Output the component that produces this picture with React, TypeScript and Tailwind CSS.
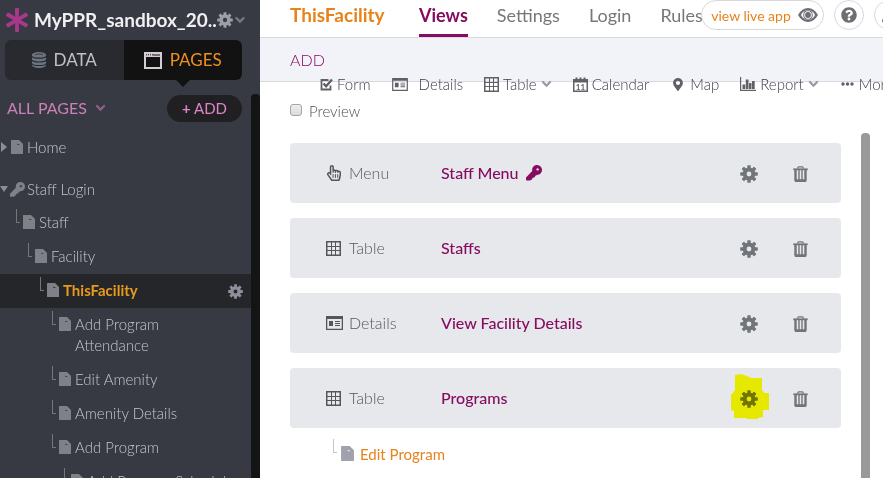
import type { ReactNode } from "react";
import { FaAsterisk, FaMapMarkerAlt, FaQuestionCircle, FaRegHandPointer } from "react-icons/fa";

type IconProps = { className?: string };

const spokes = [0, 45, 90, 135, 180, 225, 270, 315];

function Gear({ className }: IconProps) {
  return (
    <svg viewBox="0 0 18 18" className={className} fill="currentColor" aria-hidden="true">
      {spokes.map((angle) => (
        <rect key={angle} x="7.3" y="0.2" width="3.4" height="4.6" rx="0.6" transform={`rotate(${angle} 9 9)`} />
      ))}
      <circle cx="9" cy="9" r="4.4" fill="none" stroke="currentColor" strokeWidth="4" />
    </svg>
  );
}

function Chevron({ className }: IconProps) {
  return (
    <svg viewBox="0 0 10 8" className={className} fill="none" stroke="currentColor" strokeWidth="2.2" strokeLinecap="round" aria-hidden="true">
      <path d="M1.4 2 5 5.6 8.6 2" />
    </svg>
  );
}

function FileIcon({ className }: IconProps) {
  return (
    <svg viewBox="0 0 12 14" className={className} fill="currentColor" fillRule="evenodd" aria-hidden="true">
      <path d="M0 .5A.5.5 0 0 1 .5 0H8l4 4v9.5a.5.5 0 0 1-.5.5H.5a.5.5 0 0 1-.5-.5ZM6.3 3.8v1.2h2.2V4.400Z" />
    </svg>
  );
}

function KeyIcon({ className }: IconProps) {
  return (
    <svg viewBox="0 0 16 16" className={className} fill="currentColor" fillRule="evenodd" aria-hidden="true">
      <path d="M11 0a4.900 4.900 0 0 1 5 5c-.1 3-2.300 4.900-5 4.900L9.400 10.700 8.600 12.200 6.500 12.900 5.900 14.500 4 15.600H.8Q0 15.600 0 14.800V12.600L6.200 6C5.700 2.600 7.900 0 11 0ZM11.600 3.200a1.200 1.200 0 1 0 .01 0Z" />
    </svg>
  );
}

function TableIcon({ className }: IconProps) {
  return (
    <svg viewBox="0 0 15 15" className={className} fill="none" stroke="currentColor" aria-hidden="true">
      <rect x="0.75" y="0.75" width="13.5" height="13.5" strokeWidth="1.5" />
      <path d="M5.500 1v13M9.500 1v13M1 5.500h13M1 9.500h13" strokeWidth="1" />
    </svg>
  );
}

function DetailsIcon({ className }: IconProps) {
  return (
    <svg viewBox="0 0 17 14" className={className} fill="currentColor" aria-hidden="true">
      <path fillRule="evenodd" d="M0 0h17v14H0ZM1.300 3v9.700h14.400V3Z" />
      <path d="M3 5h4v5H3ZM9 5h5v1H9ZM9 7h5v1H9ZM9 9h5v1H9Z" />
    </svg>
  );
}

function FormIcon({ className }: IconProps) {
  return (
    <svg viewBox="0 0 13 13" className={className} fill="none" stroke="currentColor" aria-hidden="true">
      <path d="M8.500 2H1.500v9.500h9V7.500" strokeWidth="1.800" />
      <path d="m3.500 5.500 2.600 2.800L12 1.500" strokeWidth="2.400" />
    </svg>
  );
}

function CalendarIcon({ className }: IconProps) {
  return (
    <svg viewBox="0 0 15 15" className={className} fill="none" stroke="currentColor" aria-hidden="true">
      <rect x="0.75" y="2.75" width="13.5" height="11.5" strokeWidth="1.5" />
      <path d="M1 4h13" strokeWidth="3" />
      <path d="M3.500.5v3M11.500.5v3M7.500.5v3" strokeWidth="2" />
      <text x="7.500" y="12.800" textAnchor="middle" fontSize="8" fontWeight="700" fill="currentColor" stroke="none">11</text>
    </svg>
  );
}

function ReportIcon({ className }: IconProps) {
  return (
    <svg viewBox="0 0 16 14" className={className} fill="currentColor" aria-hidden="true">
      <path d="M0 0h1.200v12.800H16V14H0ZM2.500 7.500h2.700V12H2.500ZM5.800 2.500h2.700V12H5.800ZM9 6h2.500v6H9ZM12 4h2.700v8H12Z" />
    </svg>
  );
}

function DotsIcon({ className }: IconProps) {
  return (
    <svg viewBox="0 0 13 4" className={className} fill="currentColor" aria-hidden="true">
      <circle cx="2" cy="2" r="1.700" />
      <circle cx="6.500" cy="2" r="1.700" />
      <circle cx="11" cy="2" r="1.700" />
    </svg>
  );
}

function TrashIcon({ className }: IconProps) {
  return (
    <svg viewBox="0 0 15 16" className={className} fill="none" stroke="currentColor" aria-hidden="true">
      <path d="M4.800 2.500V1.800Q4.800.8 5.800.8h3.400q1 0 1 1v.7" strokeWidth="1.300" />
      <path d="M.3 3.300h14.400" strokeWidth="1.800" />
      <path d="M2.500 4v10q0 1 1 1h8q1 0 1-1V4" strokeWidth="2.400" />
      <path d="M2 14.300h11" strokeWidth="2" />
      <path d="M6 4v10M9 4v10" strokeWidth="1.400" />
    </svg>
  );
}

function DatabaseIcon({ className }: IconProps) {
  return (
    <svg viewBox="0 0 14 16" className={className} aria-hidden="true">
      <path fill="currentColor" d="M0 3c0-4 14-4 14 0v10c0 4-14 4-14 0Z" />
      <g fill="none" stroke="#292a2f" strokeWidth="1.100">
        <path d="M0 4.200c1 2.600 13 2.600 14 0M0 8c1 2.600 13 2.600 14 0M0 11.600c1 2.600 13 2.600 14 0" />
        <path d="M3 2.800c2-1.200 6-1.200 8 0" strokeWidth="0.800" />
      </g>
    </svg>
  );
}

function WindowIcon({ className }: IconProps) {
  return (
    <svg viewBox="0 0 18 17" className={className} fill="none" stroke="currentColor" aria-hidden="true">
      <rect x="1" y="1" width="16" height="15" strokeWidth="2" />
      <path d="M1 3.500h16" strokeWidth="3" />
      <path d="M2 2.800h7" strokeWidth="1" strokeDasharray="1 1" stroke="#121212" />
      <path d="M9 3h7" strokeWidth="1" stroke="#121212" />
    </svg>
  );
}

function EyeIcon({ className }: IconProps) {
  return (
    <svg viewBox="0 0 20 14" className={className} fill="currentColor" fillRule="evenodd" aria-hidden="true">
      <path d="M0 7Q4 0 10 0t10 7q-4 7-10 7T0 7ZM10 2a5 5 0 1 0 .01 0Z" />
      <path d="M3 7q1-2.600 3.200-3.700-2 3.700 0 7.400Q4 9.600 3 7ZM17 7q-1-2.600-3.200-3.700 2 3.700 0 7.400Q16 9.600 17 7Z" fill="white" />
      <circle cx="10" cy="7" r="2.900" />
      <circle cx="10" cy="7" r="4.300" fill="none" stroke="currentColor" strokeWidth="1" />
    </svg>
  );
}

function Elbow({ className }: IconProps) {
  return <span className={`h-[14px] w-1 shrink-0 border-b border-l ${className}`} />;
}

const pages = [
  { name: "Staff", indent: "pl-4" },
  { name: "Facility", indent: "pl-7" },
  { name: "ThisFacility", indent: "pl-10", active: true },
  { name: "Add Program Attendance", indent: "pl-[52px]" },
  { name: "Edit Amenity", indent: "pl-[52px]" },
  { name: "Amenity Details", indent: "pl-[52px]" },
  { name: "Add Program", indent: "pl-[52px]" },
  { name: "Add Program Schedule", indent: "pl-16" },
];

function Sidebar() {
  return (
    <aside className="flex w-[260px] shrink-0 flex-col overflow-hidden bg-[#383a43] text-[#c6c6ca]">
      <div className="flex h-10 shrink-0 items-center pl-[5px]">
        <FaAsterisk className="size-6 shrink-0 text-[#a8388a]" />
        <h1 className="ml-[5px] whitespace-nowrap text-[19px] font-bold leading-6 text-[#f0f0f2]">MyPPR_sandbox_20..</h1>
        <button aria-label="App settings" className="flex items-center gap-0.5 text-[#9b9ea6]">
          <Gear className="size-4" />
          <Chevron className="h-2 w-[10px] text-[#777a84]" />
        </button>
      </div>
      <nav className="relative mx-[5px] mr-[18px] grid h-10 shrink-0 grid-cols-2 text-[17px]">
        <button className="flex items-center justify-center gap-2 rounded-l-md bg-[#292a2f] text-[#c0c1c5]">
          <DatabaseIcon className="h-4 w-[14px] text-[#6c7480]" />
          DATA
        </button>
        <button className="flex items-center justify-center gap-2 rounded-r-md bg-[#121212] text-[#f0901e]">
          <WindowIcon className="h-[17px] w-[18px] text-[#d5cdd4]" />
          PAGES
        </button>
        <svg viewBox="0 0 14 7" className="absolute right-[52px] top-full h-[7px] w-[14px] fill-[#121212]" aria-hidden="true">
          <path d="M0 0h14L7 7Z" />
        </svg>
      </nav>
      <div className="mt-[14px] flex min-h-0 flex-1">
        <div className="min-w-0 flex-1">
          <div className="flex h-7 items-center justify-between pl-[7px] pr-[9px] text-[#cc80b8]">
            <button className="flex items-center gap-2 text-[16px]">
              ALL PAGES
              <Chevron className="h-2 w-[11px] text-[#925f88]" />
            </button>
            <button className="h-[27px] w-[75px] rounded-full bg-[#202023] text-[15px] leading-[27px] text-[#dc86c6]">
              <span className="font-bold">+</span> ADD
            </button>
          </div>
          <div className="mt-2 text-[15px] font-light leading-[21px]">
            <a href="#home" className="mb-2 flex h-[34px] items-center">
              <span className="ml-px border-y-[5px] border-l-[6px] border-y-transparent border-l-[#8d8e95]" />
              <FileIcon className="ml-1 h-[14px] w-3 text-[#808188]" />
              <span className="ml-1">Home</span>
            </a>
            <a href="#staff-login" className="flex h-[34px] items-center">
              <span className="border-x-[4px] border-t-[6px] border-x-transparent border-t-[#8d8e95]" />
              <KeyIcon className="ml-0.5 size-[15px] text-[#808188]" />
              <span className="ml-0.5">Staff Login</span>
            </a>
            {pages.map((page) => (
              <a
                key={page.name}
                href={`#${page.name}`}
                className={`flex items-start pb-[7px] pr-2 pt-[6px] ${page.indent} ${page.active ? "bg-[#252629] font-bold text-[#e89a1c]" : ""}`}
              >
                <Elbow className="-mt-[3px] border-[#77757a]" />
                <FileIcon className="ml-[3px] mt-[3px] h-[14px] w-3 shrink-0 text-[#808188]" />
                <span className={`ml-[4px] ${page.active ? "flex-1" : "max-w-[130px]"} ${page.name === "Add Program Schedule" ? "whitespace-nowrap" : ""}`}>
                  {page.name}
                </span>
                {page.active && <Gear className="mt-1 size-[15px] text-[#8d909a]" />}
              </a>
            ))}
          </div>
        </div>
        <div className="w-[9px] rounded-t bg-[#131414]" />
      </div>
    </aside>
  );
}

function Tool({ icon, label, menu }: { icon: ReactNode; label: string; menu?: boolean }) {
  return (
    <button className="flex items-center gap-1">
      {icon}
      {label}
      {menu && <Chevron className="h-2 w-[11px] text-[#9b9ca2]" />}
    </button>
  );
}

const views = [
  { kind: "Menu", title: "Staff Menu", icon: <FaRegHandPointer className="size-4" />, locked: true },
  { kind: "Table", title: "Staffs", icon: <TableIcon className="size-[15px]" /> },
  { kind: "Details", title: "View Facility Details", icon: <DetailsIcon className="h-[14px] w-[17px]" /> },
  { kind: "Table", title: "Programs", icon: <TableIcon className="size-[15px]" />, marked: true },
];

export default function App() {
  return (
    <div className="flex h-screen overflow-hidden bg-white font-['Lato',sans-serif]">
      <Sidebar />
      <main className="flex min-w-0 flex-1 flex-col overflow-hidden">
        <header className="relative flex h-[38px] shrink-0 border-b border-[#d9dae0] pl-[30px] text-[18px] leading-[31px]">
          <h2 className="w-[129px] text-[19px] font-bold leading-[29px] text-[#e8821a]">ThisFacility</h2>
          <nav className="flex gap-[29px] text-[#77777a]">
            <a href="#views" className="h-[37px] border-b-[3px] border-[#850c5f] font-bold text-[#850c5f]">Views</a>
            <a href="#settings">Settings</a>
            <a href="#login">Login</a>
            <a href="#rules">Rules</a>
          </nav>
          <div className="absolute -right-[21px] top-0 flex gap-[10px] text-[#6d6f75]">
            <button className="flex h-[30px] w-[123px] items-center justify-center gap-[7px] rounded-full border border-[#d8d8da] bg-white pl-1 text-[14px] text-[#e8821a]">
              view live app
              <EyeIcon className="h-[14px] w-5 text-[#6d6f75]" />
            </button>
            <button aria-label="Help" className="flex size-[30px] items-center justify-center rounded-full border border-[#d8d8da] bg-white">
              <FaQuestionCircle className="size-4" />
            </button>
            <button aria-label="Account" className="flex size-[30px] items-center justify-center rounded-full border border-[#d8d8da] bg-white">
              <svg viewBox="0 0 16 16" className="size-4" fill="currentColor" aria-hidden="true">
                <circle cx="8" cy="4.500" r="3.500" />
                <path d="M1 15q0-6 7-6t7 6Z" />
              </svg>
            </button>
          </div>
        </header>
        <div className="h-11 shrink-0 border-b border-[#d9dae0] bg-[#f2f3f8] pl-[30px] text-[16px] font-light leading-[44px] text-[#850c5f]">ADD</div>
        <div className="-mt-2 flex h-5 shrink-0 items-center gap-[21px] whitespace-nowrap pl-[60px] text-[15px] font-light text-[#3f4045]">
          <Tool icon={<FormIcon className="size-[13px] text-[#606167]" />} label="Form" />
          <Tool icon={<DetailsIcon className="mr-[7px] h-[13px] w-4 text-[#606167]" />} label="Details" />
          <Tool icon={<TableIcon className="size-[15px] text-[#606167]" />} label="Table" menu />
          <Tool icon={<CalendarIcon className="size-[15px] text-[#606167]" />} label="Calendar" />
          <Tool icon={<FaMapMarkerAlt className="h-[13px] w-4 text-[#606167]" />} label="Map" />
          <Tool icon={<ReportIcon className="h-[14px] w-4 text-[#606167]" />} label="Report" menu />
          <Tool icon={<DotsIcon className="mx-px h-1 w-[13px] text-[#606167]" />} label="More" />
        </div>
        <label className="mt-[7px] flex h-5 shrink-0 items-center gap-[7px] pl-[30px] text-[15px] font-light text-[#505157]">
          <input type="checkbox" className="-mt-[3px] size-3 appearance-none rounded-[3px] border border-[#a5a5a5] bg-linear-to-b from-[#eeeeee] to-[#dcdcdc]" />
          Preview
        </label>
        <div className="mt-3 flex min-h-0 flex-1 pl-[30px] pr-[13px]">
          <div className="mr-5 min-w-0 flex-1 pt-[10px]">
            <ul className="flex flex-col gap-[15px]">
              {views.map((view) => (
                <li key={view.title} className="flex h-[60px] items-center rounded bg-[#e7e8ec] pl-9 pr-[33px] text-[16px]">
                  <div className="flex w-[115px] items-center font-light text-[#55565c]">
                    <span className="w-[23px]">{view.icon}</span>
                    {view.kind}
                  </div>
                  <a href={`#${view.title}`} className="flex flex-1 items-center gap-[7px] font-medium text-[#850c5f]">
                    {view.title}
                    {view.locked && <KeyIcon className="size-4" />}
                  </a>
                  <div className="flex items-center gap-[35px] pt-0.5 text-[#70757a]">
                    <button aria-label={`Settings for ${view.title}`} className="relative">
                      <Gear className="size-[18px]" />
                      {view.marked && (
                        <svg viewBox="0 0 38 45" className="absolute -left-[9px] -top-4 h-[45px] w-[38px] max-w-none fill-[#ffff00] mix-blend-multiply" aria-hidden="true">
                          <path d="M4 1 10 0l6 2 4 2h11v12l2 3h5v17h-6v7l-5 1v1H16v-1H3v-7l-3-1V21l4-5Z" />
                        </svg>
                      )}
                    </button>
                    <button aria-label={`Delete ${view.title}`}>
                      <TrashIcon className="h-4 w-[15px]" />
                    </button>
                  </div>
                </li>
              ))}
            </ul>
            <a href="#edit-program" className="mt-[11px] flex items-start pl-[43px] text-[15px] leading-[30px] text-[#e8821a]">
              <Elbow className="border-[#c3c4ca]" />
              <FileIcon className="ml-1 mt-[7px] h-[15px] w-[13px] text-[#a0a1ac]" />
              <span className="ml-[6px]">Edit Program</span>
            </a>
          </div>
          <div className="w-[9px] rounded-t bg-[#999999]" />
        </div>
      </main>
    </div>
  );
}
